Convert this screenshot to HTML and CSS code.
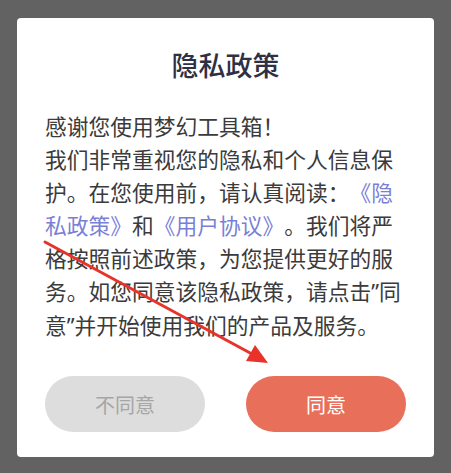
FILE: index.html
```html
<!DOCTYPE html>
<html lang="zh-CN">
<head>
<meta charset="utf-8">
<link rel="stylesheet" href="styles.css">
</head>
<body>
<div class="dialog">
  <h1 class="title">隐私政策</h1>
  <p class="body">感谢您使用梦幻工具箱！<br>我们非常重视您的隐私和个人信息保护。在您使用前，请认真阅读：<span class="link">《隐私政策》</span>和<span class="link">《用户协议》</span>。我们将严格按照前述政策，为您提供更好的服务。如您同意该隐私政策，请点击<span class="q">”</span>同意<span class="q">”</span>并开始使用我们的产品及服务。</p>
  <div class="actions">
    <button class="btn btn-no">不同意</button>
    <button class="btn btn-yes">同意</button>
  </div>
</div>
<svg class="arrow" width="451" height="473" viewBox="0 0 451 473">
  <line x1="45" y1="242" x2="252" y2="354" stroke="#e8332a" stroke-width="3" stroke-linecap="round"/>
  <polygon points="268,363 246,361 255,345" fill="#e8332a"/>
</svg>
</body>
</html>
```
FILE: styles.css
```css
html, body {
  margin: 0;
  padding: 0;
}
body {
  width: 451px;
  height: 473px;
  background: #626262;
  position: relative;
  overflow: hidden;
  font-family: "Noto Sans CJK SC", "Noto Sans", sans-serif;
  text-spacing-trim: space-all;
}
.dialog {
  box-sizing: border-box;
  margin: 18px 0 0 17px;
  width: 417px;
  height: 439px;
  background: #ffffff;
  border-radius: 4px;
  padding: 30px 28px 0 28px;
}
.title {
  margin: 0;
  text-align: center;
  font-size: 27px;
  line-height: 34px;
  font-weight: 500;
  color: #2f2f45;
}
.body {
  margin: 27px 0 0 0;
  font-size: 21.75px;
  line-height: 33px;
  color: #3b3b3b;
  text-spacing-trim: space-all;
}
.link {
  color: #7a7fd6;
}
.q {
  font-family: "Noto Sans", sans-serif;
}
.actions {
  display: flex;
  justify-content: center;
  gap: 41px;
  margin-top: 34px;
}
.btn {
  width: 161px;
  height: 56px;
  border: none;
  border-radius: 28px;
  font-family: "Noto Sans CJK SC", "Noto Sans", sans-serif;
  font-size: 20px;
  padding: 0;
}
.btn-no {
  background: #dddddd;
  color: #a6a6a6;
}
.btn-yes {
  background: #e8705b;
  color: #ffffff;
}
.arrow {
  position: absolute;
  left: 0;
  top: 0;
  pointer-events: none;
}
```
